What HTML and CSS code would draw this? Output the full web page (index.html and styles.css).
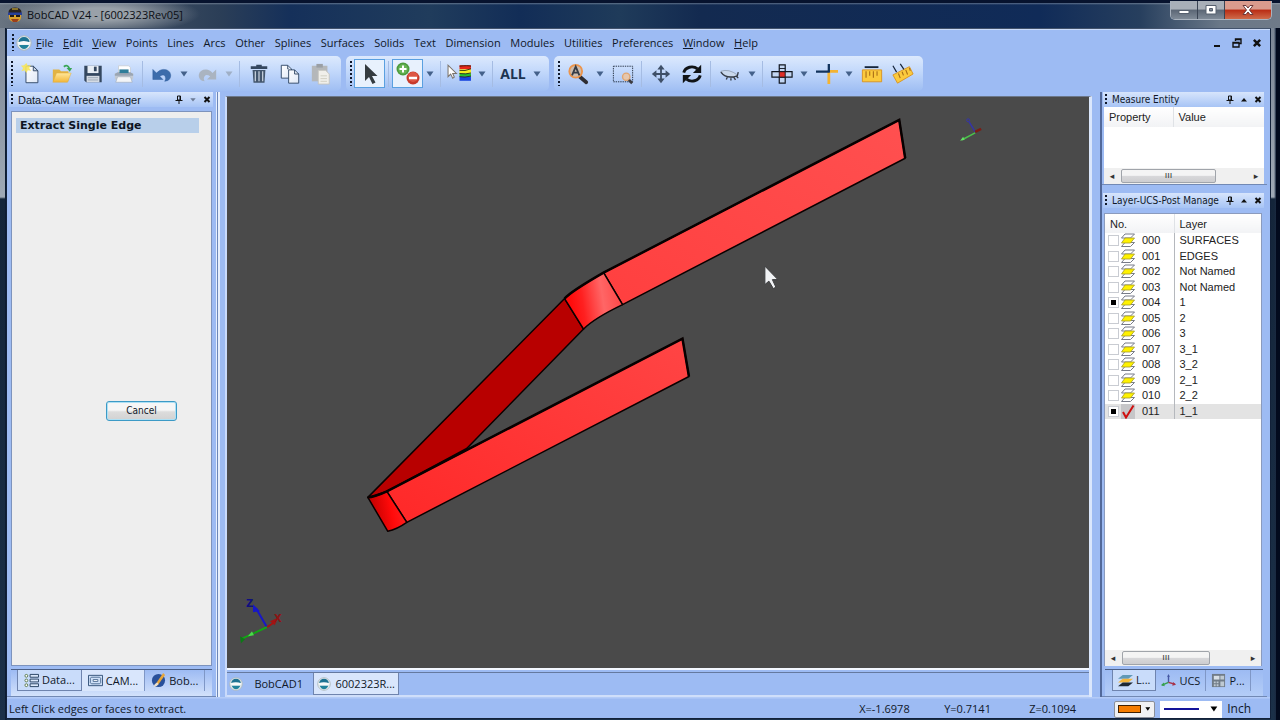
FILE: index.html
```html
<!DOCTYPE html>
<html lang="en">
<head>
<meta charset="utf-8">
<title>BobCAD V24 - [6002323Rev05]</title>
<link rel="stylesheet" href="styles.css">
</head>
<body>
<svg class="defs" aria-hidden="true">
  <defs>
    <linearGradient id="page" x1="0" y1="0" x2="1" y2="1"><stop offset="0" stop-color="#fff"/><stop offset="1" stop-color="#dfe8f6"/></linearGradient>
    <linearGradient id="gold" x1="0" y1="0" x2="0" y2="1"><stop offset="0" stop-color="#ffe79a"/><stop offset="1" stop-color="#f2b637"/></linearGradient>
    <symbol id="layer" viewBox="0 0 14 15">
      <path d="M4 9.500h9.500l-4 4h-9z" fill="#fff" stroke="#777b88"/>
      <path d="M4 1h9.500l-4 4h-9z" fill="#fff" stroke="#777b88"/>
      <path d="M4 5h9.500l-4 5h-9z" fill="#fff200" stroke="#a39a2a" stroke-width=".8"/>
    </symbol>
    <symbol id="globe" viewBox="0 0 16 16">
      <circle cx="8" cy="8" r="7.200" fill="#e8eef0" stroke="#aeb9bd"/>
      <path d="M2.500 7a5.500 5 0 0 1 11 0z" fill="#1d7291"/>
      <path d="M1.500 7.500q6-3 13 0l-2 2h-9z" fill="#f7fafa"/>
      <path d="M3 10h10q-2 4-5 4t-5-4z" fill="#21839c"/>
    </symbol>
    <symbol id="pin" viewBox="0 0 8 9"><path d="M2.500 1h3v4h-3zM0.500 5.500h7M4 5.500v3.500" fill="none" stroke="#111"/><path d="M4.500 1h1v4h-1z" fill="#111"/></symbol>
    <symbol id="cross" viewBox="0 0 8 8"><path d="M1.500 1.500l5 5m0-5l-5 5" stroke="#111" stroke-width="2"/></symbol>
    <symbol id="up" viewBox="0 0 8 8"><path d="M1 6l3-3.500 3 3.500z" fill="#111"/></symbol>
    <symbol id="down" viewBox="0 0 8 8"><path d="M0.500 1.500h7l-3.500 5z"/></symbol>
  </defs>
</svg>
<div class="window">
  <header class="titlebar">
    <svg class="ico16" viewBox="0 0 16 16"><ellipse cx="8" cy="5" rx="6.500" ry="4.500" fill="#2a2320"/><path d="M2 7h12v4q-1 4-6 4t-6-4z" fill="#d9a02c"/><path d="M1 5.500h14v2.500h-14z" fill="#273f9a"/><path d="M3 8h4v2h-4zM9 8h4v2h-4z" fill="#201a18"/><path d="M4 12h8l-2 3h-4z" fill="#9b3f1c"/><path d="M5 2h6" stroke="#e9c53b"/></svg>
    <h1 class="title">BobCAD V24 - [6002323Rev05]</h1>
    <div class="caption">
      <button class="cap" aria-label="Minimize"><svg viewBox="0 0 14 12"><path d="M2 6.500h10v3h-10z" fill="#fff" stroke="#56606f"/></svg></button>
      <button class="cap" aria-label="Restore"><svg viewBox="0 0 14 12"><path d="M2 1.500h10v8.500h-10zM5.500 4.500v2.500h3v-2.500z" fill="#fff" stroke="#56606f" fill-rule="evenodd"/></svg></button>
      <button class="cap cap-close" aria-label="Close"><svg viewBox="0 0 14 12"><path d="M2 1.500h3l2 2.500 2-2.500h3l-3.500 4.500 3.500 4.500h-3l-2-2.500-2 2.500h-3l3.500-4.500z" fill="#fff" stroke="#6d3a3a"/></svg></button>
    </div>
  </header>
  <div class="client">
    <nav class="menubar">
      <span class="grip"></span>
      <svg class="ico16"><use href="#globe"/></svg>
      <div class="menus">
        <button><u>F</u>ile</button><button><u>E</u>dit</button><button><u>V</u>iew</button><button>Points</button><button>Lines</button><button>Arcs</button><button>Other</button><button>Splines</button><button>Surfaces</button><button>Solids</button><button>Text</button><button>Dimension</button><button>Modules</button><button>Utilities</button><button>Preferences</button><button><u>W</u>indow</button><button><u>H</u>elp</button>
      </div>
      <div class="mdi">
        <button aria-label="Minimize document"><svg viewBox="0 0 10 10"><path d="M2 8h6" stroke="#111" stroke-width="2"/></svg></button>
        <button aria-label="Restore document"><svg viewBox="0 0 10 10"><path d="M3.500 3v-2h5.500v4.500h-2M3 1.500h6" fill="none" stroke="#111" stroke-width="1.400"/><path d="M1 4.500h6v4.500h-6zM1 5h6" fill="none" stroke="#111" stroke-width="1.400"/></svg></button>
        <button aria-label="Close document"><svg viewBox="0 0 8 8"><use href="#cross"/></svg></button>
      </div>
    </nav>

    <div class="toolbars">
      <div class="toolbar">
        <span class="grip"></span>
        <button class="tool" aria-label="New"><svg viewBox="0 0 24 24"><path d="M6.500 3.500h8l5 5v13h-13z" fill="url(#page)" stroke="#2e4564"/><path d="M14.500 3.500v5h5z" fill="#c9d6ea" stroke="#2e4564"/><path d="M7 0l1.500 3 3.500-.5-2 3 2 3-3.500-.5-1.500 3-2-3-3.500 1 2-3.500-2.500-2.500 3.500-.5z" fill="#f7e55a" opacity=".9"/></svg></button>
        <button class="tool" aria-label="Open"><svg viewBox="0 0 24 24"><path d="M2 7h7l2 2h8v11h-17z" fill="#e2b344"/><path d="M6 11h16l-4 10h-16z" fill="url(#gold)" stroke="#e0ab3a" stroke-width=".5"/><path d="M14 4q4-3 6 2" fill="none" stroke="#3aa655" stroke-width="2"/><path d="M17 5.500h6l-2.500 4z" fill="#3aa655"/></svg></button>
        <button class="tool" aria-label="Save"><svg viewBox="0 0 24 24"><path d="M2.500 3h19v18h-17l-2-2z" fill="#34475f"/><path d="M6 3h12v8h-12z" fill="#e8eef5"/><path d="M13 4h3v5h-3z" fill="#34475f"/><path d="M5 14h14v7h-14z" fill="#d5dbe3"/><path d="M6.500 16h11M6.500 18.500h11" stroke="#9aa6b5"/></svg></button>
        <button class="tool" aria-label="Print"><svg viewBox="0 0 24 24"><path d="M6 3h11l2 2v6h-13z" fill="#fff" stroke="#c9d0d8"/><path d="M2 11h20v7h-20z" fill="#c3cad3"/><path d="M2 12l3-2h14l3 2v2h-20z" fill="#9aa5b2"/><path d="M7 7h10v4h-10z" fill="#2f7d99"/><path d="M5 15h14l2 6h-18z" fill="#f3f5f7" stroke="#9ba5b0" stroke-width=".6"/></svg></button>
        <span class="sep"></span>
        <button class="tool" aria-label="Undo"><svg viewBox="0 0 24 24"><path d="M2 7v11h11l-3.500-3.500q6-4 6.500 2.500 0 1-1 3 7-1 6.500-7-1-6-8-6-4 0-7.500 4z" fill="#3c6cab" stroke="#2d5b99" stroke-width=".5"/></svg></button>
        <button class="drop" aria-label="Undo list"><svg><use href="#down"/></svg></button>
        <button class="tool" aria-label="Redo"><svg viewBox="0 0 24 24"><path d="M22 7v11h-10l3.500-3.500q-6-4-7 2.500 0 2 1 3-7-1-6.500-7 1-6 8-6 4 0 7 4z" fill="#aab4c1"/></svg></button>
        <button class="drop off" aria-label="Redo list"><svg><use href="#down"/></svg></button>
        <span class="sep"></span>
        <button class="tool" aria-label="Delete"><svg viewBox="0 0 24 24"><path d="M3 5h18M9 3.500h6" stroke="#34475f" stroke-width="3"/><path d="M5 7.500h14l-1 14h-12z" fill="#43566d"/><path d="M8 9v11M12 9v11M16 9v11" stroke="#c5cfdb" stroke-width="1.400"/></svg></button>
        <button class="tool" aria-label="Copy"><svg viewBox="0 0 24 24"><path d="M2.500 2.500h7l4 4v10h-11z" fill="url(#page)" stroke="#2e4564"/><path d="M10.500 7.500h6.500l4.500 4.500v10h-11z" fill="url(#page)" stroke="#2e4564"/><path d="M17 7.500v4.500h4.500M9.500 2.500v4h1" fill="none" stroke="#2e4564"/></svg></button>
        <button class="tool" aria-label="Paste"><svg viewBox="0 0 24 24"><path d="M2 3h17v17h-17z" fill="#b4b7ba"/><path d="M7 1h7v4h-7z" fill="#9a9fa5"/><path d="M9 8h8l4 4v11h-12z" fill="#f0efea" stroke="#c3c3be"/><path d="M11.500 14h7M11.500 17h7M11.500 20h7" stroke="#cfcdbf"/></svg></button>
      </div>
      <div class="toolbar">
        <span class="grip"></span>
        <button class="tool on" aria-label="Select"><svg viewBox="0 0 24 24"><path d="M7 2v17l4-4 3.500 7 3-1.500-3.500-6.500h5.500z" fill="#343b40"/></svg></button>
        <span class="sep"></span>
        <button class="tool on" aria-label="Add or remove"><svg viewBox="2 2 24 24"><circle cx="9" cy="9" r="6.500" fill="#4c9b3e"/><circle cx="9" cy="9" r="4.800" fill="#68b455"/><path d="M9 5.500v7M5.500 9h7" stroke="#fff" stroke-width="2"/><circle cx="19" cy="18" r="6.500" fill="#c83a2b"/><circle cx="19" cy="17" r="5" fill="#dd5644"/><path d="M15 18h8" stroke="#fff" stroke-width="2.500"/></svg></button>
        <button class="drop" aria-label="Add or remove options"><svg><use href="#down"/></svg></button>
        <span class="sep"></span>
        <button class="tool" aria-label="Select by colour"><svg class="wide" viewBox="0 0 24 24"><path d="M1 4v11l2.500-2.500 2 4 1.500-1-1.500-3.500h3.500z" fill="#fff" stroke="#7b736b"/><path d="M12 4h11v4h-11z" fill="#e9261a"/><path d="M12 8h11v4h-11z" fill="#f2ec22"/><path d="M12 12h11v3h-11z" fill="#25c02e"/><path d="M12 15h11v4h-11z" fill="#1845df"/><path d="M12 5q8-1 11 0M12 9q5 1 11-1.500M12 12q6 1 11-.5M12 15q5 1 11-.5" fill="none" stroke="#231e10" stroke-width=".8"/></svg></button>
        <button class="drop" aria-label="Colour filter"><svg><use href="#down"/></svg></button>
        <span class="sep"></span>
        <button class="tool all">ALL</button>
        <button class="drop" aria-label="Filter list"><svg><use href="#down"/></svg></button>
      </div>
      <div class="toolbar">
        <span class="grip"></span>
        <button class="tool" aria-label="Zoom all"><svg viewBox="0 0 24 24"><path d="M14 15l7 6" stroke="#2e2d33" stroke-width="4" stroke-linecap="round"/><circle cx="9.500" cy="9" r="7" fill="#cdbcae" stroke="#ec944b" stroke-width="2"/><path d="M5.500 13.500l4-9.500 4 9.500M7 10.500h5" fill="none" stroke="#363c45" stroke-width="2"/></svg></button>
        <button class="drop" aria-label="Zoom options"><svg><use href="#down"/></svg></button>
        <button class="tool" aria-label="Zoom window"><svg viewBox="0 0 24 24"><path d="M1.500 3.500h21v17h-21z" fill="none" stroke="#1f2b3c" stroke-dasharray="1.500 1"/><path d="M18 18l4 4" stroke="#3d3c40" stroke-width="3"/><circle cx="15.500" cy="15" r="4" fill="#e6c7ad" stroke="#e0a672" stroke-width="1.500"/></svg></button>
        <span class="sep"></span>
        <button class="tool" aria-label="Pan"><svg viewBox="0 0 24 24"><path d="M12 5v14M5 12h14" stroke="#3f5068" stroke-width="2"/><path d="M12 2l4 5h-8zM12 22l4-5h-8zM2 12l5-4v8zM22 12l-5-4v8z" fill="#3f5068"/></svg></button>
        <button class="tool" aria-label="Rotate"><svg viewBox="0 0 24 24"><path d="M3 10.500a9 8 0 0 1 15-4M21 13.500a9 8 0 0 1-15 4" fill="none" stroke="#111417" stroke-width="3.200"/><path d="M22 2v9h-9zM2 22v-9h9z" fill="#111417"/></svg></button>
        <span class="sep"></span>
        <button class="tool" aria-label="Blank"><svg viewBox="0 0 24 24"><path d="M2 9q9-3 18 4-2 3-7 3-7 0-11-7z" fill="#c9d8ec" stroke="#8b98aa" stroke-width=".8"/><path d="M2 10q6 8 18 4l1-4M9 15.500l-1 2.500M13 16.500v2.500M16 15.500l2 3M19 14.500l2 2" fill="none" stroke="#353c46" stroke-width="1.500"/></svg></button>
        <button class="drop" aria-label="Blank options"><svg><use href="#down"/></svg></button>
        <span class="sep"></span>
        <button class="tool" aria-label="Views"><svg viewBox="0 0 24 24"><path d="M9 2h6.500v20h-6.500z" fill="#c3d6f2" stroke="#10161f" stroke-width="1.300"/><path d="M1 9.500h22v6h-22z" fill="#c3d6f2" stroke="#10161f" stroke-width="1.300"/><path d="M9 9.500h6.500v6h-6.500z" fill="#df2d25" stroke="#10161f"/><path d="M9 6h6.500" stroke="#10161f" stroke-width="1"/></svg></button>
        <button class="drop" aria-label="View options"><svg><use href="#down"/></svg></button>
        <button class="tool" aria-label="Axes"><svg viewBox="0 0 24 24"><path d="M13 9h11M14 9v14" stroke="#f4b331" stroke-width="3"/><path d="M0 9.500h15M14 1v9" fill="none" stroke="#12335d" stroke-width="2.500"/></svg></button>
        <button class="drop" aria-label="Axes options"><svg><use href="#down"/></svg></button>
        <button class="tool" aria-label="Measure"><svg viewBox="0 0 24 24"><path d="M4 4.500h15" stroke="#15253c" stroke-width="2"/><path d="M1.500 7.500h21v13h-21z" fill="#fbca3d" stroke="#d89322"/><path d="M5.500 9v7M9.500 9v5M13.500 9v7M17.500 9v5" stroke="#a96d16" stroke-width="1.200"/></svg></button>
        <button class="tool" aria-label="Dimension"><svg viewBox="0 0 24 24"><path d="M1 13l18-9 4 8-17 10z" fill="#fbca3d" stroke="#d89322"/><path d="M7 11.500l2 5M11 9.500l1.500 4M15 7.500l2 5M19 5.500l1 3" stroke="#a96d16" stroke-width="1.200"/><path d="M1 3l4 7M9 1l4 6" stroke="#16253a" stroke-width="1.300"/></svg></button>
      </div>
    </div>

    <main class="workspace">
      <aside class="column">
        <section class="panel fill">
          <header class="panel-head"><span class="grip"></span><h2>Data-CAM Tree Manager</h2>
            <button aria-label="Pin"><svg><use href="#pin"/></svg></button><button class="dim" aria-label="Menu"><svg viewBox="0 0 12 12"><path d="M2 4h8l-4 5z"/></svg></button><button aria-label="Close"><svg><use href="#cross"/></svg></button></header>
          <div class="tree">
            <h3>Extract Single Edge</h3>
            <button class="cancel">Cancel</button>
          </div>
          <nav class="tabs">
            <button class="tab boxed"><svg viewBox="0 0 16 16"><g fill="#dce9fb" stroke="#25405f"><path d="M6.500 1.500h9v3h-9zM6.500 6.500h9v3h-9zM6.500 11.500h9v3h-9z"/></g><g fill="#fff" stroke="#57774a"><circle cx="2.500" cy="3" r="1.500"/><circle cx="2.500" cy="8" r="1.500"/><circle cx="2.500" cy="13" r="1.500"/></g></svg>Data...</button>
            <button class="tab current"><svg viewBox="0 0 16 16"><path d="M.5 2.500h15v11h-15z" fill="#cfe0f8" stroke="#315078"/><path d="M3.500 4.500h9l1 1v5l-1 1h-9l-1-1v-5z" fill="none" stroke="#506f94"/><path d="M5.500 7h5v2h-5z" fill="#fff" stroke="#506f94"/></svg>CAM...</button>
            <button class="tab"><svg viewBox="0 0 16 16"><circle cx="8" cy="8" r="7" fill="#28509a"/><path d="M13 0l2 2-7 10-4 2 2-4z" fill="#e7a63b"/><path d="M3 15q0-4 4-5l1 2q-2 3-5 3z" fill="#e9dfcf"/></svg>Bob...</button>
          </nav>
        </section>
      </aside>

      <section class="document">
        <svg class="canvas" viewBox="227 98 863 570" role="img" aria-label="Bent strip model">
          <defs>
            <linearGradient id="bend" x1="0" y1=".5" x2="1" y2=".35"><stop offset=".1" stop-color="#ff0c0c"/><stop offset=".3" stop-color="#ff2020"/><stop offset=".65" stop-color="#ff6666"/><stop offset="1" stop-color="#ff4444"/></linearGradient>
            <linearGradient id="low" x1="0" y1=".6" x2="1" y2=".4"><stop offset=".1" stop-color="#c20000"/><stop offset=".6" stop-color="#ff0a0a"/><stop offset="1" stop-color="#ff2222"/></linearGradient>
            <linearGradient id="arm" x1="0" y1="1" x2="1" y2="0"><stop offset="0" stop-color="#ff2828"/><stop offset="1" stop-color="#ff4545"/></linearGradient>
            <linearGradient id="arm2" x1="0" y1="1" x2="1" y2="0"><stop offset="0" stop-color="#ff3f3f"/><stop offset="1" stop-color="#ff5050"/></linearGradient>
          </defs>
          <g stroke="#0b0000" stroke-width="1.500" stroke-linejoin="round">
            <path d="M565 299L584 329.500 467 449 387 492 368 498z" fill="#b80000"/>
            <path d="M604 273L900 120 906 158.500 623 305z" fill="url(#arm2)"/>
            <path d="M565 299Q571 292 604 273L623 305Q594 319 584 329.500z" fill="url(#bend)"/>
            <path d="M387 492L683 339 689.500 377 407 523z" fill="url(#arm)"/>
            <path d="M368 498Q374 498 387 492L407 523Q397 530 388 532z" fill="url(#low)"/>
          </g>
          <path d="M565 299Q571 292 604 273L900 120 906 158.500M368 498Q374 498 387 492L683 339 689.500 377" fill="none" stroke="#080000" stroke-width="2.500"/>
          <g fill="none" stroke-width="2"><path d="M267 628l-11-19" stroke="#1717c8"/><path d="M267 628l9-6" stroke="#a31313"/><path d="M267 628l-26 12" stroke="#14a514"/></g>
          <path d="M253 605l7 7-7 1z" fill="#1717c8"/><path d="M270 622l7-3-2 7z" fill="#a31313"/><path d="M248 637l4-5 2 4z" fill="#49dc49"/><path d="M240 637l5 3-4 4z" fill="#0c7a16"/>
          <text class="axis" x="246" y="608" fill="#10107e">Z</text><text class="axis" x="274" y="623" fill="#8c1414">X</text>
          <g fill="none"><path d="M976 132l-6-10" stroke="#3434a8" stroke-width="1.500"/><path d="M976 132l6-3" stroke="#7c1c14" stroke-width="2.500"/><path d="M976 133l-13 7" stroke="#4bc44b" stroke-width="1.500"/><circle cx="969" cy="120.500" r="1.500" stroke="#3434a8"/></g>
          <path d="M961 141l3-4 1.500 3z" fill="#63e163"/>
          <path d="M765.500 266.500v18.500l4-3.500 4.500 7.500 2.500-1.500-3.500-7.500h5.500z" fill="#f1f3f5" stroke="#3c3d3f"/>
        </svg>
        <nav class="doctabs">
          <button class="doctab"><svg class="ico16"><use href="#globe"/></svg>BobCAD1</button>
          <button class="doctab current"><svg class="ico16"><use href="#globe"/></svg>6002323R...</button>
        </nav>
      </section>

      <aside class="column right">
        <section class="panel measure">
          <header class="panel-head"><span class="grip"></span><h2>Measure Entity</h2>
            <button aria-label="Pin"><svg><use href="#pin"/></svg></button><button aria-label="Collapse"><svg><use href="#up"/></svg></button><button aria-label="Close"><svg><use href="#cross"/></svg></button></header>
          <div class="listbox">
            <table class="list"><thead><tr><th>Property</th><th>Value</th></tr></thead></table>
            <div class="scroll"><button aria-label="Scroll left">◂</button><span class="thumb">ııı</span><button class="end" aria-label="Scroll right">▸</button></div>
          </div>
        </section>
        <section class="panel fill">
          <header class="panel-head"><span class="grip"></span><h2>Layer-UCS-Post Manage</h2>
            <button aria-label="Pin"><svg><use href="#pin"/></svg></button><button aria-label="Collapse"><svg><use href="#up"/></svg></button><button aria-label="Close"><svg><use href="#cross"/></svg></button></header>
          <div class="listbox inset">
            <table class="list layers">
              <thead><tr><th>No.</th><th>Layer</th></tr></thead>
              <tbody>
                <tr><td><label><input type="checkbox"><svg><use href="#layer"/></svg>000</label></td><td>SURFACES</td></tr>
                <tr><td><label><input type="checkbox"><svg><use href="#layer"/></svg>001</label></td><td>EDGES</td></tr>
                <tr><td><label><input type="checkbox"><svg><use href="#layer"/></svg>002</label></td><td>Not Named</td></tr>
                <tr><td><label><input type="checkbox"><svg><use href="#layer"/></svg>003</label></td><td>Not Named</td></tr>
                <tr><td><label><input type="checkbox" checked><svg><use href="#layer"/></svg>004</label></td><td>1</td></tr>
                <tr><td><label><input type="checkbox"><svg><use href="#layer"/></svg>005</label></td><td>2</td></tr>
                <tr><td><label><input type="checkbox"><svg><use href="#layer"/></svg>006</label></td><td>3</td></tr>
                <tr><td><label><input type="checkbox"><svg><use href="#layer"/></svg>007</label></td><td>3_1</td></tr>
                <tr><td><label><input type="checkbox"><svg><use href="#layer"/></svg>008</label></td><td>3_2</td></tr>
                <tr><td><label><input type="checkbox"><svg><use href="#layer"/></svg>009</label></td><td>2_1</td></tr>
                <tr><td><label><input type="checkbox"><svg><use href="#layer"/></svg>010</label></td><td>2_2</td></tr>
                <tr class="active"><td><label><input type="checkbox" checked><svg viewBox="0 0 14 15"><path d="M0 0h14v15h-14z" fill="#c6c6c8"/><path d="M2 8l3 5.500 7.500-12" fill="none" stroke="#cf1010" stroke-width="2"/></svg>011</label></td><td>1_1</td></tr>
              </tbody>
            </table>
            <div class="scroll"><button aria-label="Scroll left">◂</button><span class="thumb thin">ııı</span><button class="end" aria-label="Scroll right">▸</button></div>
          </div>
          <nav class="tabs">
            <button class="tab boxed"><svg viewBox="0 0 16 16"><path d="M5 2h11l-5 4h-11z" fill="#6199b7"/><path d="M5 6h11l-5 4h-11z" fill="#f4b63d"/><path d="M5 10h11l-5 4h-11z" fill="#1d2835"/></svg>L...</button>
            <button class="tab current"><svg viewBox="0 0 16 16"><path d="M8 10v-7" stroke="#4457a3" stroke-width="1.500"/><path d="M8 10l-7 3" stroke="#36a04c" stroke-width="1.500"/><path d="M8 10l7 2" stroke="#a8334a" stroke-width="1.500"/><path d="M6.500 4l1.500-3 1.500 3z" fill="#4457a3"/><path d="M3 10l-3 3 4 1z" fill="#36a04c"/><path d="M13 9.500l3 3-4 1z" fill="#a8334a"/></svg>UCS</button>
            <button class="tab"><svg viewBox="0 0 16 16"><path d="M1 1h14v14h-14z" fill="#707b87"/><path d="M3 3h6v4h-6z" fill="#d8dfe5"/><path d="M3 9h2v2h-2zM6 9h2v2h-2zM3 12h2v2h-2zM6 12h2v2h-2zM10 3h4v4h-4zM10 9h4v5h-4z" fill="#bec9d2"/></svg>P...</button>
          </nav>
        </section>
      </aside>
    </main>

    <footer class="status">
      <span class="hint">Left Click edges or faces to extract.</span>
      <span class="coord">X=-1.6978</span><span class="coord">Y=0.7141</span><span class="coord">Z=0.1094</span>
      <button class="swatch" aria-label="Colour"><i></i><svg><use href="#down"/></svg></button>
      <button class="linestyle" aria-label="Line style"><i></i><svg><use href="#down"/></svg></button>
      <span class="unit">Inch</span>
    </footer>
  </div>
</div>
</body>
</html>
```

FILE: styles.css
```css
* { box-sizing: border-box; }
body { margin: 0; font: 11px/16px "Open Sans", "Noto Sans", sans-serif; color: #101828; }
button { font: inherit; color: inherit; margin: 0; padding: 0; border: 0; background: none; }
h1, h2, h3 { margin: 0; font: inherit; }
.defs { position: absolute; width: 0; height: 0; }
.ico16 { width: 16px; height: 16px; flex: none; }

.window {
  height: 100vh; display: flex; flex-direction: column; padding: 0 9px 1px 6px;
  background: linear-gradient(90deg, transparent 5px, #0d1c33 5px, #0d1c33 7px, transparent 7px),
    linear-gradient(270deg, #020a1d 4px, #1a2940 4px, transparent 6px),
    linear-gradient(180deg, #75808f 0, #9fa9b5 197px, #14253a 199px, #1b3048 100%);
}
.titlebar {
  flex: none; height: 28px; display: flex; align-items: center; gap: 4px; margin: 0 -9px 0 -6px; padding: 0 5px 1px 7px;
  border-top: 3px solid #07132e;
  background: linear-gradient(180deg, #a4b0be80 0, transparent 2px),
    radial-gradient(ellipse 100px 20px at 100px 11px, #99a1a9 30%, #99a1a900 100%),
    linear-gradient(90deg, #697481 0, #56616f 40px, #2b3e57 220px, #15305a 290px, #203c5c 430px, #122d57 520px, #1f3b5a 620px, #132a50 700px, #102b58 1040px, #273f5e 1140px, #6a7888 1220px, #6f7a88 100%);
}
.title { flex: 1; color: #0b0e14; }
.caption { display: flex; align-self: flex-start; margin: -2px 3px 0 0; border: 1px solid #aab3bf; border-top: 0; border-radius: 0 0 5px 5px; overflow: hidden; }
.cap { width: 27px; height: 18px; display: grid; place-items: center; border-right: 1px solid #394353; background: linear-gradient(#a8afb8 0 45%, #5b6675 50%, #7f8a97); }
.cap svg { width: 14px; height: 12px; }
.cap-close { width: 46px; border: 0; background: linear-gradient(#da9b8d 0 45%, #b92c14 50%, #cf6b4a); }

.client { flex: 1; min-height: 0; display: flex; flex-direction: column; background: #9dbbf3; border: 1px solid #122139; border-top-color: #43536c; box-shadow: inset 0 1px #cbdcfa; }
.grip { flex: none; width: 2px; align-self: stretch; margin: 4px 2px; background: repeating-linear-gradient(#10182a 0 2px, transparent 2px 4px); }

.menubar { flex: none; height: 27px; display: flex; align-items: center; padding: 0 8px 0 3px; }
.menubar .grip { margin: 5px 2px; }
.menus { display: flex; justify-content: space-between; flex: 0 1 722px; margin-left: 4px; white-space: nowrap; }
.mdi { margin-left: auto; display: flex; gap: 10px; }
.mdi svg { display: block; width: 10px; height: 10px; }

.toolbars { flex: none; display: flex; gap: 5px; height: 36px; padding-bottom: 1px; }
.toolbar { display: flex; align-items: center; padding: 0 5px 0 2px; border-radius: 0 5px 5px 0; background: linear-gradient(#dce9fd, #c2d8fb 45%, #9fbef3); }
.toolbar + .toolbar { border-radius: 5px; }
.toolbar .grip { margin: 5px 2px; }
.tool { width: 31px; height: 29px; display: grid; place-items: center; }
.tool svg { width: 22px; height: 22px; }
.tool.on { border: 1px solid #5aa0e0; background: #e8f1fd; }
.tool.on svg { width: 24px; height: 24px; }
.tool svg.wide { width: 25px; height: 25px; }
.tool.all { width: 34px; font: bold 14px "Open Sans", sans-serif; color: #1c3350; }
.drop { width: 14px; display: grid; place-items: center; fill: #44618a; }
.drop svg { width: 8px; height: 8px; }
.drop.off { fill: #9fafc6; }
.sep { width: 1px; height: 26px; margin: 0 3px; background: #a5bce3; }

.workspace { flex: 1; min-height: 0; display: grid; grid-template-columns: 210px minmax(0, 1fr) 167px; gap: 8px; padding-right: 3px; }
.column { min-height: 0; display: flex; flex-direction: column; gap: 8px; border-right: 1px solid #e6effd; box-shadow: 1px 0 #6c86b7, 3px 0 #e6effd; }
.column.right { border-right: 0; border-left: 2px solid #52699a; box-shadow: none; }
.panel { display: flex; flex-direction: column; min-height: 0; padding: 0 3px 0 2px; border-bottom: 1px solid #7289b4; }
.right .panel { padding-left: 1px; }
.panel.fill { flex: 1; }
.panel-head { flex: none; height: 15px; display: flex; align-items: center; gap: 6px; padding-right: 2px; background: linear-gradient(#d7e5fc, #a7c4f5); font: 11px/14px "Liberation Sans", Arial, sans-serif; }
.right .panel-head { font: 10px/14px "DejaVu Sans Condensed", "DejaVu Sans", sans-serif; }
.panel-head .grip { margin: 2px 0 2px 2px; }
.panel-head h2 { flex: 1; min-width: 0; white-space: nowrap; margin-left: -1px; }
.panel-head svg { display: block; width: 8px; height: 9px; }
.panel-head .dim { fill: #6b7a94; }
.panel-head button:first-of-type { margin-left: -4px; }

.tree { flex: 1; margin: 4px 1px 0 2px; border: 1px solid #7d93bd; background: #eeeeee; display: flex; flex-direction: column; padding: 6px 12px 0 4px; }
.tree h3 { font: bold 11px/15px "DejaVu Sans", sans-serif; padding-left: 4px; background: #b8cfea; color: #0d1422; }
.cancel { width: 71px; height: 20px; margin: 268px 0 0 90px; border: 1px solid #3c9ac6; border-radius: 3px; background: linear-gradient(#f6f6f6 45%, #dcdcdc 55%, #d2d2d2); box-shadow: inset 0 0 0 1px #aee0f4; font: 10px/14px "DejaVu Sans Condensed", "DejaVu Sans", sans-serif; }

.tabs { flex: none; display: flex; align-items: flex-start; height: 27px; margin: 3px 1px 0 2px; padding-left: 6px; border-top: 1px solid #4b5f86; background: linear-gradient(#9dbbf3, #d3e2fb); }
.tab { height: 21px; display: flex; align-items: center; gap: 3px; padding: 0 6px; white-space: nowrap; border-right: 1px solid #7f97c6; }
.tab svg { width: 15px; height: 15px; flex: none; }
.boxed { border: 1px solid #6f84ae; border-top: 0; background: #c9dcfa; }
.tab.current { background: #d9e6fc; }
.right .tabs { background: linear-gradient(#9dbbf3, #b4cdf7); padding-left: 7px; }
.right .tab { padding: 0 5px; gap: 3px; }
.right .tab.current { background: none; }

.document { min-width: 0; min-height: 0; display: flex; flex-direction: column; border-left: 2px solid #c9dafb; border-right: 3px solid #dbe7fc; border-top: 1px solid #6c7789; margin-top: 4px; }
.canvas { flex: 1; min-height: 0; width: 100%; background: #4a4a4a; }
.axis { font: bold 10px "DejaVu Sans", sans-serif; }
.doctabs { flex: none; display: flex; height: 29px; border-top: 2px solid #f4f8ff; box-shadow: inset 0 2px #9dbbf3, inset 0 3px #65799f; border-bottom: 2px solid #cfdefa; padding-top: 3px; }
.doctab { width: 86px; display: flex; align-items: center; justify-content: space-between; padding: 0 10px 0 2px; height: 22px; }
.doctab.current { background: #d9e6fc; border: 1px solid #6f84ae; border-top: 0; padding: 0 3px; }
.doctab .ico16 { width: 14px; height: 14px; }

.measure { height: 93px; }
.listbox { flex: 1; min-height: 0; display: flex; flex-direction: column; background: #fff; color: #222; font: 11px/14px "Liberation Sans", Arial, sans-serif; }
.measure .listbox { margin-left: 1px; }
.inset { margin: 5px 2px 0 1px; border: 1px solid #8b9bbd; border-bottom: 0; }
.list { width: 100%; table-layout: fixed; border-collapse: collapse; }
.list th { height: 20px; padding: 0 0 0 5px; text-align: left; font-weight: normal; background: linear-gradient(#fff, #f2f3f5); }
.list th:first-child { width: 69px; border-right: 1px solid #dfe2e6; }
.layers { height: 205px; }
.layers th { height: 19px; }
.layers td { padding: 0 0 0 5px; white-space: nowrap; line-height: 13px; }
.layers td:first-child { padding-left: 3px; border-right: 1px solid #b5b8bd; }
.layers label { display: flex; align-items: center; }
.layers label svg { width: 14px; height: 15px; margin: 0 7px 0 2px; }
.layers input { appearance: none; width: 11px; height: 11px; margin: 0; border: 1px solid #c9ccd2; background: #fff; }
.layers input:checked { background: linear-gradient(#000, #000) center / 5px 5px no-repeat #fff; }
.layers .active td { background: #e3e3e3; }
.scroll { flex: none; height: 16px; margin-top: auto; display: flex; align-items: center; gap: 4px; background: #f0f0f0; padding: 0 3px; color: #333; font: 9px/14px "DejaVu Sans", sans-serif; }
.scroll button { width: 10px; }
.scroll .end { margin-left: auto; }
.thumb { width: 95px; height: 14px; border: 1px solid #a0a4aa; border-radius: 2px; background: linear-gradient(#f4f4f4 45%, #d8d8da 50%, #cdcdd0); text-align: center; font-size: 9px; line-height: 11px; }
.thumb.thin { width: 88px; }

.status { flex: none; height: 21px; display: flex; align-items: center; padding: 2px 19px 0 2px; border-top: 1px solid #b3cbf7; box-shadow: inset 0 1px #a9c3f6; }
.hint { flex: 1; white-space: nowrap; }
.coord { width: 85px; }
.swatch, .linestyle { display: flex; align-items: center; height: 17px; }
.swatch { width: 41px; gap: 4px; padding: 0 4px 0 3px; border: 1px solid #8b8f99; border-radius: 2px; background: #f0f1f3; }
.swatch i { width: 24px; height: 8px; background: #f57c00; border: 1px solid #402000; }
.swatch svg { width: 6px; height: 6px; }
.linestyle { width: 62px; margin: 0 5px; gap: 11px; padding: 0 4px; background: #fff; }
.linestyle i { width: 36px; height: 2px; background: #14149a; }
.linestyle svg { width: 8px; height: 8px; }
.unit { font-size: 12px; }
```
